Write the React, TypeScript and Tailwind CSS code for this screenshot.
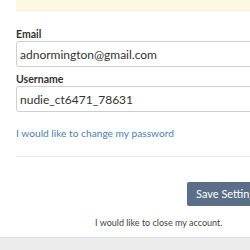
export default function App() {
  return (
    <div className="relative w-[250px] h-[250px] overflow-hidden bg-white font-['Lato','Liberation_Sans',sans-serif]">
      <div className="w-[260px] ml-4">
        <div className="h-[11px] bg-[#fcf8e3] border-b border-[#f7f0d8]" />
        <form className="flex flex-col">
          <label className="mt-[17px] h-[13px] text-[10.5px] leading-[13px] font-bold text-[#333]">
            Email
          </label>
          <input
            readOnly
            value="adnormington@gmail.com"
            className="h-[26px] w-full rounded-[3px] border border-[#cfcfcf] px-[3px] text-[12px] text-[#333] outline-none"
          />
          <label className="mt-[6px] h-[13px] text-[10.5px] leading-[13px] font-bold text-[#333]">
            Username
          </label>
          <input
            readOnly
            value="nudie_ct6471_78631"
            className="h-[26px] w-full rounded-[3px] border border-[#cfcfcf] px-[3px] text-[12px] text-[#333] outline-none"
          />
          <a className="mt-[15px] h-[13px] text-[10.2px] leading-[13px] text-[#4b7fae]">
            I would like to change my password
          </a>
          <hr className="mt-[16px] border-t border-[#ececec]" />
          <div className="mt-[25px] flex">
            <button
              type="button"
              className="ml-[171px] h-[24px] shrink-0 whitespace-nowrap rounded-[2px] bg-[#5b6e88] px-[9px] text-[11px] text-white"
            >
              Save Settings
            </button>
          </div>
          <div className="mt-[10px] h-[13px] pl-[79px] text-[9px] leading-[13px] text-[#444]">
            I would like to close my account.
          </div>
        </form>
      </div>
      <div className="absolute left-0 bottom-0 h-[13px] w-full bg-[#ececec] border-t border-[#dcdcdc]" />
    </div>
  );
}
